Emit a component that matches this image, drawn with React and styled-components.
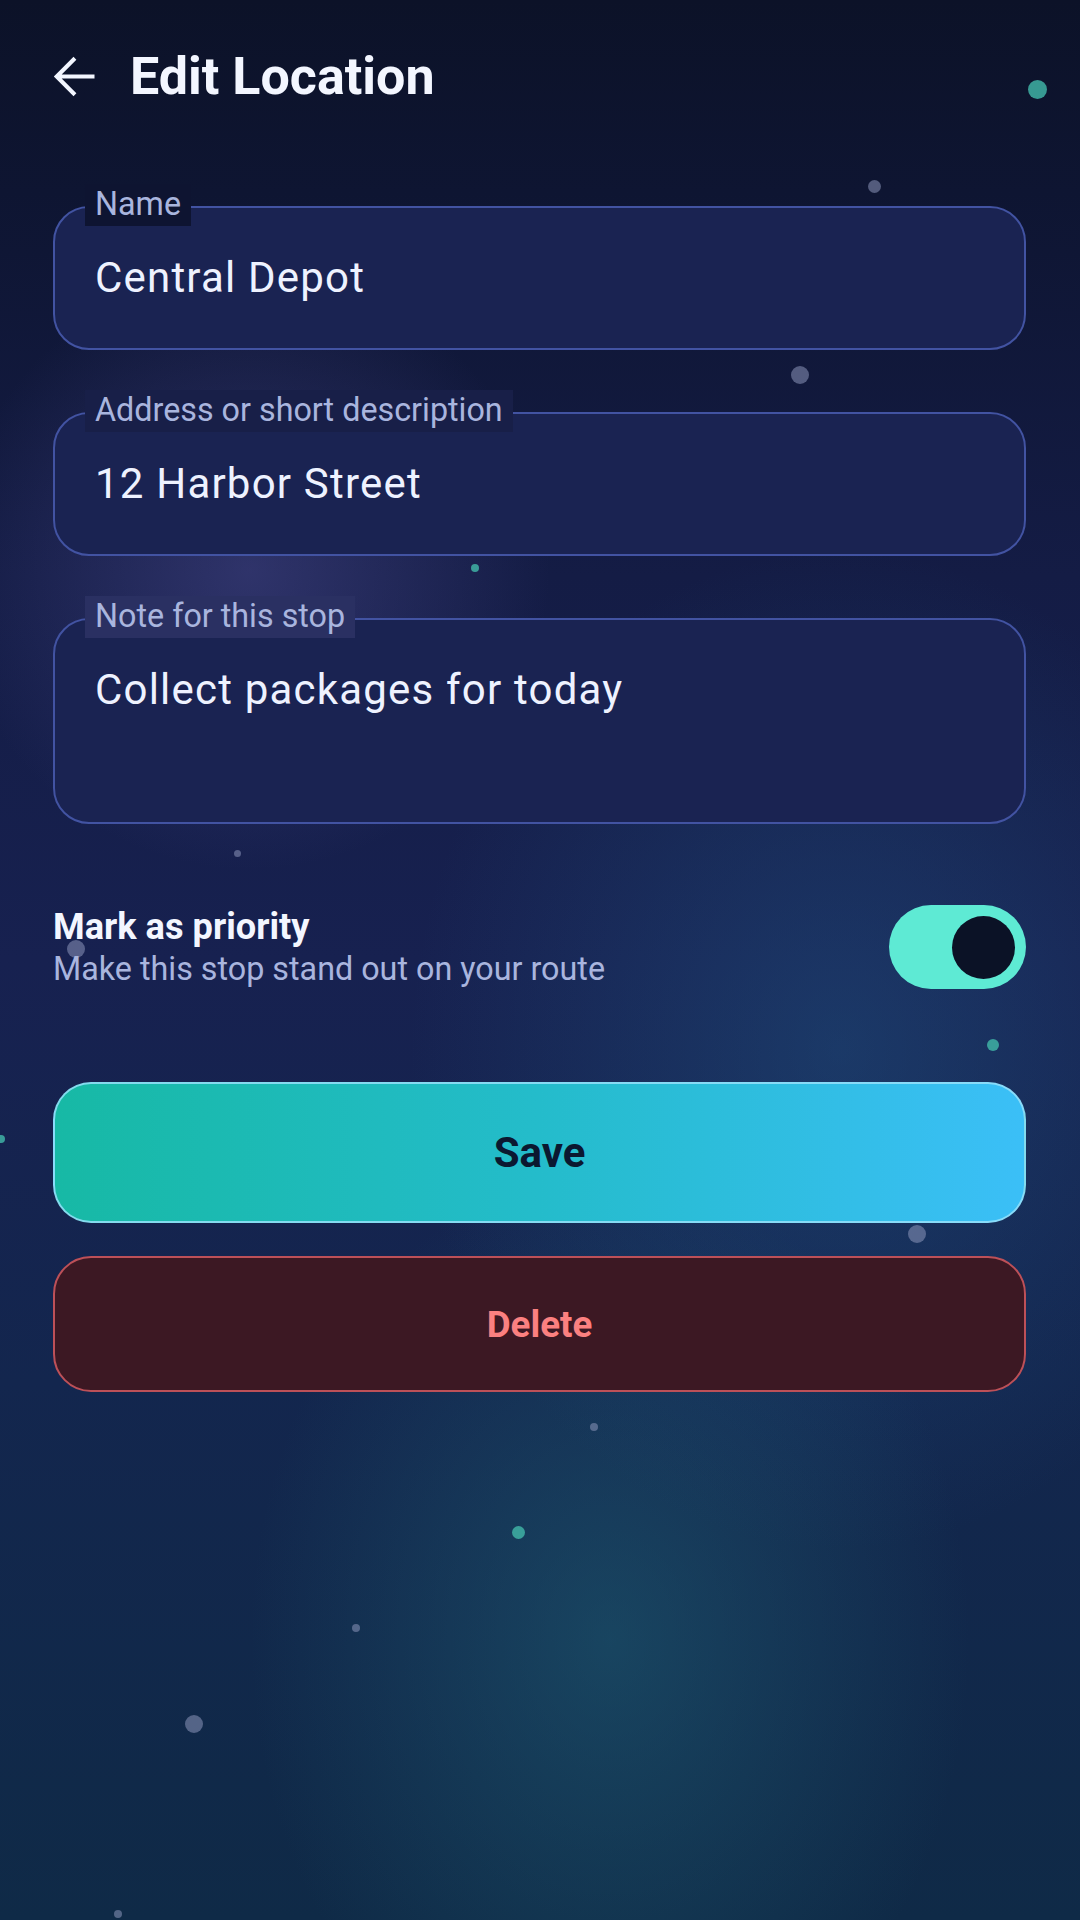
import React from 'react';
import styled, { createGlobalStyle } from 'styled-components';

const GlobalStyle = createGlobalStyle`
  html, body {
    margin: 0;
    padding: 0;
    background: #0c1228;
  }
  * {
    box-sizing: border-box;
  }
`;

// Background + decorative particles
const Screen = styled.div`
  position: relative;
  width: 1080px;
  min-height: 1920px;
  overflow: hidden;
  font-family: Roboto, "Noto Sans", sans-serif;
  background-color: #111a3c;
  background-image:
    radial-gradient(circle 300px at 250px 570px, rgba(80, 80, 152, 0.45), rgba(80, 80, 152, 0) 100%),
    radial-gradient(ellipse 430px 500px at 840px 1050px, rgba(34, 92, 140, 0.4), rgba(34, 92, 140, 0) 100%),
    radial-gradient(ellipse 360px 470px at 610px 1640px, rgba(32, 100, 120, 0.48), rgba(32, 100, 120, 0) 100%),
    linear-gradient(180deg, #0c1228 0%, #0e1532 10%, #141c45 30%, #172150 50%, #13264e 72%, #0f2a47 100%);
`;

const Particles = styled.div`
  position: absolute;
  inset: 0;
  pointer-events: none;
  z-index: 0;
`;

const Dot = styled.span`
  position: absolute;
  border-radius: 50%;
  background: ${(p) => (p.$teal ? 'rgba(64, 178, 164, 0.85)' : 'rgba(140, 150, 185, 0.55)')};
`;

const Content = styled.div`
  position: relative;
  z-index: 1;
  padding: 45px 54px 0 53px;
`;

const Header = styled.header`
  display: flex;
  align-items: center;
  gap: 25px;
  height: 63px;
  margin-left: -11px;
`;

const BackButton = styled.button`
  display: flex;
  align-items: center;
  justify-content: center;
  width: 63px;
  height: 63px;
  padding: 0;
  border: none;
  background: none;
  color: #f3f6ff;
`;

const Title = styled.h1`
  margin: 0;
  font-size: 52px;
  font-weight: 700;
  color: #f3f6ff;
`;

const Form = styled.div`
  display: flex;
  flex-direction: column;
  gap: 62px;
  margin-top: 98px;
`;

const FieldBox = styled.div`
  position: relative;
  min-height: ${(p) => (p.$tall ? '206px' : '144px')};
  padding: 45px 40px;
  border: 2px solid #4253a2;
  border-radius: 36px;
  background: #1a2352;
`;

const FieldLabel = styled.span`
  position: absolute;
  top: -24px;
  left: 30px;
  height: 42px;
  padding: 0 10px;
  line-height: 40px;
  font-size: 32.3px;
  color: #a9b5de;
  background: ${(p) => p.$bg};
`;

const FieldValue = styled.div`
  font-size: 42px;
  line-height: 50px;
  letter-spacing: 1.2px;
  color: #eef2ff;
`;

const PriorityRow = styled.div`
  display: flex;
  align-items: center;
  justify-content: space-between;
  margin-top: 81px;
`;

const PriorityText = styled.div`
  display: flex;
  flex-direction: column;
`;

const PriorityTitle = styled.div`
  font-size: 36.2px;
  line-height: 44px;
  font-weight: 700;
  color: #f3f6ff;
`;

const PrioritySub = styled.div`
  font-size: 32.3px;
  line-height: 40px;
  color: #a9b5de;
`;

const Switch = styled.div`
  display: flex;
  align-items: center;
  justify-content: ${(p) => (p.$on ? 'flex-end' : 'flex-start')};
  width: 137px;
  height: 84px;
  padding: 0 11px;
  border-radius: 42px;
  background: ${(p) => (p.$on ? '#5eead4' : '#334066')};
`;

const Thumb = styled.span`
  width: 63px;
  height: 63px;
  border-radius: 50%;
  background: #0b1226;
`;

const Actions = styled.div`
  display: flex;
  flex-direction: column;
  gap: 33px;
  margin-top: 93px;
`;

const ActionButton = styled.button`
  display: flex;
  align-items: center;
  justify-content: center;
  width: 100%;
  height: ${(p) => (p.$danger ? '136px' : '141px')};
  border-radius: 38px;
  font-family: Roboto, "Noto Sans", sans-serif;
  font-weight: 700;
  font-size: ${(p) => (p.$danger ? '36.75px' : '42px')};
  color: ${(p) => (p.$danger ? '#fb8080' : '#0b1830')};
  border: 2px solid ${(p) => (p.$danger ? '#bd5058' : 'rgba(150, 225, 250, 0.85)')};
  background: ${(p) =>
    p.$danger ? '#3c1823' : 'linear-gradient(90deg, #17b9a5 0%, #24bccb 50%, #3bbff7 100%)'};
`;

const dots = [
  { x: 1037, y: 89, d: 19, teal: true },
  { x: 874, y: 186, d: 13 },
  { x: 800, y: 375, d: 18 },
  { x: 475, y: 568, d: 8, teal: true },
  { x: 237, y: 853, d: 7 },
  { x: 76, y: 949, d: 18 },
  { x: 993, y: 1045, d: 12, teal: true },
  { x: 1, y: 1139, d: 8, teal: true },
  { x: 917, y: 1234, d: 18 },
  { x: 594, y: 1427, d: 8 },
  { x: 518, y: 1532, d: 13, teal: true },
  { x: 356, y: 1628, d: 8 },
  { x: 194, y: 1724, d: 18 },
  { x: 118, y: 1914, d: 8 },
];

const Field = ({ label, value, labelBg, tall }) => (
  <FieldBox $tall={tall}>
    <FieldLabel $bg={labelBg}>{label}</FieldLabel>
    <FieldValue>{value}</FieldValue>
  </FieldBox>
);

const App = () => {
  return (
    <Screen>
      <GlobalStyle />
      <Particles>
        {dots.map((d, i) => (
          <Dot
            key={i}
            $teal={d.teal}
            style={{ left: d.x - d.d / 2, top: d.y - d.d / 2, width: d.d, height: d.d }}
          />
        ))}
      </Particles>

      <Content>
        <Header>
          <BackButton aria-label="Back">
            <svg width="63" height="63" viewBox="0 0 24 24" fill="currentColor">
              <path d="M20 11.2H7.5l5.6-5.6L12 4.5 4.5 12l7.5 7.5 1.1-1.1-5.6-5.6H20z" />
            </svg>
          </BackButton>
          <Title>Edit Location</Title>
        </Header>

        <Form>
          <Field label="Name" value="Central Depot" labelBg="#0e1431" />
          <Field label="Address or short description" value="12 Harbor Street" labelBg="#181f48" />
          <Field label="Note for this stop" value="Collect packages for today" labelBg="#2a3062" tall />
        </Form>

        <PriorityRow>
          <PriorityText>
            <PriorityTitle>Mark as priority</PriorityTitle>
            <PrioritySub>Make this stop stand out on your route</PrioritySub>
          </PriorityText>
          <Switch $on>
            <Thumb />
          </Switch>
        </PriorityRow>

        <Actions>
          <ActionButton>Save</ActionButton>
          <ActionButton $danger>Delete</ActionButton>
        </Actions>
      </Content>
    </Screen>
  );
};

export default App;
